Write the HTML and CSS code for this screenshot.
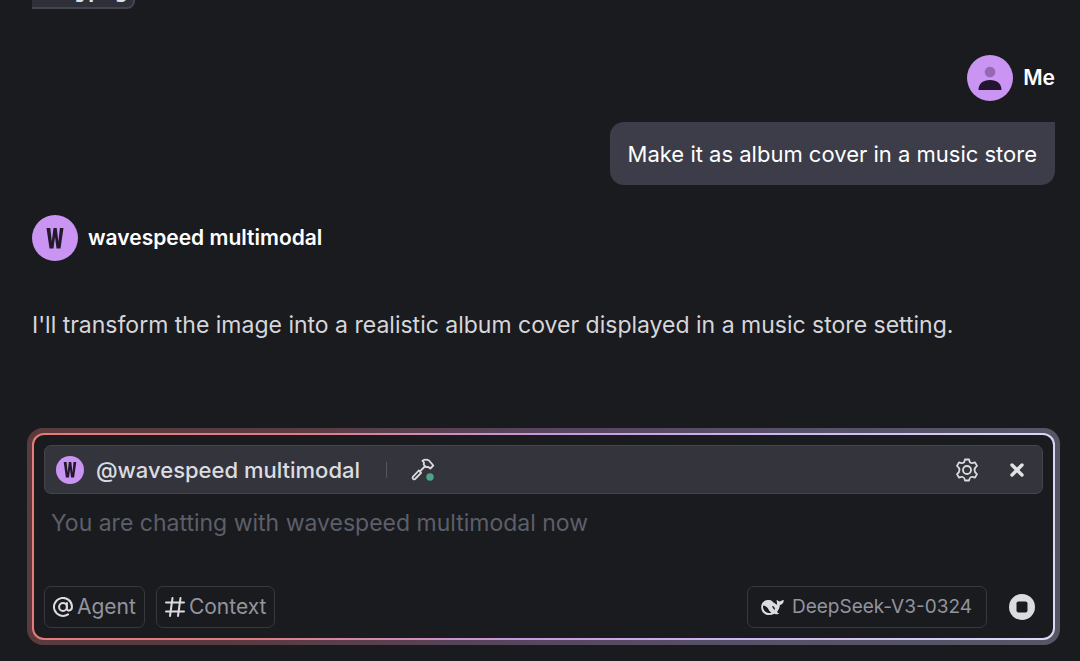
FILE: index.html
```html
<!DOCTYPE html>
<html lang="en">
<head>
<meta charset="utf-8">
<meta name="viewport" content="width=device-width, initial-scale=1">
<title>Chat</title>
<link rel="stylesheet" href="styles.css">
</head>
<body>
<main class="chat">
  <section class="thread">
    <div class="clip"><code class="tag">01.jpeg</code></div>
    <article class="message message-me">
      <header class="author">
        <svg class="avatar" viewBox="0 0 46 46" aria-hidden="true"><circle cx="23" cy="23" r="23" fill="#c994f2"/><circle cx="23" cy="17" r="5.3" fill="#9468b4"/><path d="M11.500 35c0-6.400 4.600-10 11.500-10s11.500 3.600 11.500 10z" fill="#23152f"/></svg>
        <span class="name">Me</span>
      </header>
      <p class="bubble">Make it as album cover in a music store</p>
    </article>
    <article class="message">
      <header class="author">
        <svg class="avatar" viewBox="0 0 46 46" aria-hidden="true"><circle cx="23" cy="23" r="23" fill="#c994f2"/><path fill="#23192d" d="M14.500 13h3.800l1.500 13.500L21.500 13h3.200l1.700 13.500L27.900 13h3.600l-3 20.500h-4L23 22l-1.500 11.500h-4z"/></svg>
        <span class="name">wavespeed multimodal</span>
      </header>
      <p class="reply">I'll transform the image into a realistic album cover displayed in a music store setting.</p>
    </article>
  </section>
  <div class="halo">
    <div class="ring">
      <form class="composer">
        <div class="agent-bar">
          <svg class="agent-avatar" viewBox="0 0 28 28" aria-hidden="true"><circle cx="14" cy="14" r="14" fill="#c994f2"/><path fill="#23192d" d="M7.700 6h2.900l1 10.500L12.800 6h2.500l1.200 10.500L17.500 6h2.800l-2.200 15.500h-3.100l-1-8-1 8H9.900z"/></svg>
          <span class="agent-name">@wavespeed multimodal</span>
          <span class="divider"></span>
          <button class="icon-button" type="button" aria-label="Tools"><svg width="24" height="24" viewBox="0 0 24 24" fill="none" stroke="#dcdce0" stroke-width="1.800" stroke-linejoin="round" stroke-linecap="round"><path d="M11.500 2.800c2-1.300 4.500-1.300 6.500-.300l4.300 5-3 3-2-1.500-2.300.2-2.300-2.700.3-2z"/><path d="m13.700 8.500-4.200 4.300"/><path d="m7.800 12.500-6 6.300c-.900 1.800.8 3.200 2.300 2.200l6-6.200z"/><circle cx="19" cy="19" r="3.700" fill="#4fa384" stroke="none"/></svg></button>
          <span class="spacer"></span>
          <button class="icon-button" type="button" aria-label="Settings"><svg width="24" height="24" viewBox="0 0 24 24" fill="none" stroke="#dcdce0" stroke-width="1.800" stroke-linejoin="round"><path d="M10 1.500h4q.5 3 2.100 3.500 1.400.4 3.900-.600l2 3.500q-2.500 1.900-2.500 4.100t2.500 4.100l-2 3.500q-2.500-1-3.900-.600-1.600.5-2.100 3.500h-4q-.5-3-2.100-3.500-1.400-.4-3.900.600l-2-3.500q2.500-1.900 2.500-4.100T2 7.900l2-3.500q2.500 1 3.900.600Q9.500 4.500 10 1.500z"/><circle cx="12" cy="12" r="4"/></svg></button>
          <button class="icon-button close" type="button" aria-label="Close"><svg width="16" height="16" viewBox="0 0 16 16" stroke="#e2e2e6" stroke-width="3.400" stroke-linecap="round"><path d="m3 3 10 10M13 3 3 13"/></svg></button>
        </div>
        <textarea class="prompt" rows="1" aria-label="Message" placeholder="You are chatting with wavespeed multimodal now"></textarea>
        <div class="actions">
          <button class="chip" type="button"><svg width="20" height="20" viewBox="0 0 20 20" fill="none" stroke="#dcdce0" stroke-width="2" stroke-linecap="round"><circle cx="10" cy="10" r="3.900"/><path d="M13.900 6v5.500c0 3.400 5.100 2.600 5.100-1.700a9 9 0 1 0-4 7.600"/></svg>Agent</button>
          <button class="chip" type="button"><svg width="20" height="20" viewBox="0 0 20 20" fill="none" stroke="#dcdce0" stroke-width="2" stroke-linecap="round"><path d="M1 5.500h18M1 14.500h18M7.500 1 5 19M15.500 1 13 19"/></svg>Context</button>
          <span class="spacer"></span>
          <button class="chip model" type="button"><svg width="23" height="17" viewBox="0 0 23 17"><path fill="#dcdce0" d="M.2 7.500C.5 3.500 3.500.8 7 .9c2.300 0 3.500.2 4.300 1.300.2.800 2.500 2.200 4.900 3.500C16.300 4.300 15.300 2.500 15.800.8c1 .7 1.500 1.400 2.500 1.800 1.300-.2 2.800-1.500 4.400-1.600.2 2.700-1.400 4.400-3.800 5.100-.300 3.300-1.500 5.400-2.900 6.800.600.900 1.700 1.100 2.300 1.600-1.400 1.200-3.300.900-4.800.2C7.500 18-.2 15.500.2 7.500z"/><path fill="#1a1b1f" d="M2 6.500c3.200.300 4.700 2.300 5.700 4.300.8 1.500 1.600 2.300 2.800 3.100C6 14.900 1.500 12 2 6.500zM11 7c2 0 3.300 1.800 3 3.900-1.400-.600-2.400-2-3-3.900z"/></svg>DeepSeek-V3-0324</button>
          <button class="stop" type="button" aria-label="Stop"><svg width="26" height="26" viewBox="0 0 26 26"><circle cx="13" cy="13" r="13" fill="#dcdce0"/><rect x="7.500" y="7.500" width="11" height="11" rx="2" fill="#1a1b1f"/></svg></button>
        </div>
      </form>
    </div>
  </div>
</main>
</body>
</html>
```
FILE: styles.css
```css
* { box-sizing: border-box; }
body {
  margin: 0;
  background: #1a1b1f;
  color: #fff;
  font-family: Inter, "Noto Sans", sans-serif;
  font-size: 22px;
  line-height: 32px;
}
p { margin: 0; }
button { font: inherit; color: inherit; background: none; border: 0; padding: 0; }
svg { display: block; flex: none; }
.chat { min-height: 100vh; display: flex; flex-direction: column; }
.thread { flex: 1; padding: 0 25px 0 32px; }
.clip { height: 9px; overflow: hidden; display: flex; align-items: flex-end; }
.tag {
  padding: 0 5px 0 3px;
  border: 2px solid #44454c;
  border-left: 0;
  border-radius: 0 8px 8px 0;
  background: #2e2f38;
  color: #dfe0ea;
  font: bold 22px/32px "DejaVu Sans Mono", monospace;
}
.message { display: flex; flex-direction: column; align-items: flex-start; margin-top: 30px; }
.message-me { align-items: flex-end; margin-top: 46px; }
.author { display: flex; align-items: center; gap: 10px; }
.avatar { width: 46px; height: 46px; }
.name { font-size: 21px; font-weight: 600; }
.bubble {
  margin-top: 21px;
  padding: 16px 18px 15px;
  border-radius: 14px 0 14px 14px;
  background: #3c3d49;
}
.reply { margin-top: 48px; color: #d6d6da; font-size: 23px; }
.halo {
  margin: 0 20px 16px 27px;
  padding: 5px;
  border-radius: 16px;
  background: linear-gradient(100deg, #5b3a3d 0%, #5a3b42 25%, #57465f 50%, #57506a 70%, #575664 100%);
}
.ring {
  padding: 2px;
  border-radius: 12px;
  background: linear-gradient(100deg, #e57d78 0%, #dc7f88 25%, #c69be0 50%, #cdb8f0 70%, #dcdaf6 100%);
}
.composer {
  display: flex;
  flex-direction: column;
  padding: 10px;
  border-radius: 10px;
  background: #1a1b1f;
}
.agent-bar {
  display: flex;
  align-items: center;
  height: 49px;
  padding: 0 17px 0 11px;
  border: 1px solid #44454c;
  border-radius: 7px;
  background: #34353c;
}
.agent-avatar { width: 28px; height: 28px; margin-right: 12px; }
.agent-name { color: #dcdce0; font-weight: 500; }
.divider { width: 1px; height: 16px; margin: 0 24px 0 26px; background: #55565e; }
.spacer { flex: 1; }
.close { margin-left: 30px; }
.prompt {
  height: 32px;
  margin: 13px 0 47px;
  padding: 0 7px;
  border: 0;
  outline: 0;
  resize: none;
  overflow: hidden;
  background: transparent;
  color: #dcdce0;
  font: inherit;
  font-size: 23px;
}
.prompt::placeholder { color: #5c5f69; opacity: 1; }
.actions { display: flex; align-items: center; gap: 11px; }
.chip {
  display: flex;
  align-items: center;
  gap: 4px;
  height: 42px;
  padding: 0 8px;
  border: 1px solid #383940;
  border-radius: 7px;
  color: #92949e;
  font-size: 21px;
}
.model { gap: 8px; padding: 0 14px 0 13px; font-size: 19px; }
.stop { margin: 0 8px 0 11px; }
```
